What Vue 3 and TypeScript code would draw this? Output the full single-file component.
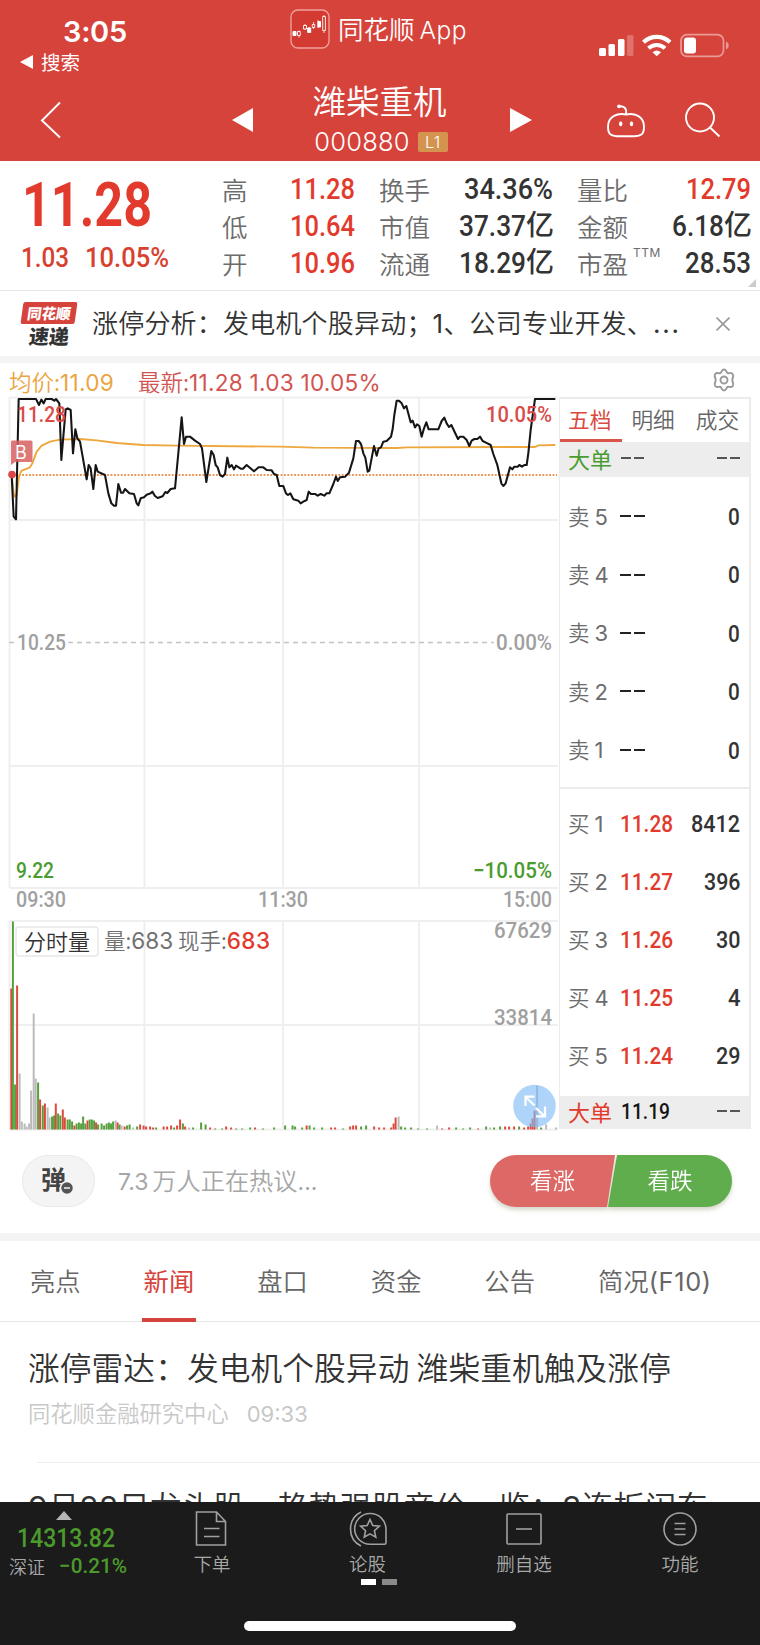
<script setup lang="ts">
import { h, type FunctionalComponent } from 'vue'

/* Narrow numerals: glyphs are fitted to width `w`, the box is as tall as a digit. */
const Num: FunctionalComponent<{ t: string; w: number; s: number }> = (p) =>
  h('svg', { class: 'num', width: p.w, height: p.s }, [
    h('text', {
      x: 0,
      y: p.s,
      'font-size': p.s / 0.711,
      textLength: p.w,
      lengthAdjust: 'spacingAndGlyphs',
    }, p.t),
  ])
Num.props = ['t', 'w', 's']

interface Stat { label: string; value: string; w: number; unit?: string; red?: boolean; sup?: string }
const stats: Stat[] = [
  { label: '高', value: '11.28', w: 65, red: true },
  { label: '换手', value: '34.36%', w: 89 },
  { label: '量比', value: '12.79', w: 65, red: true },
  { label: '低', value: '10.64', w: 65, red: true },
  { label: '市值', value: '37.37', w: 67, unit: '亿' },
  { label: '金额', value: '6.18', w: 52, unit: '亿' },
  { label: '开', value: '10.96', w: 65, red: true },
  { label: '流通', value: '18.29', w: 67, unit: '亿' },
  { label: '市盈', value: '28.53', w: 66, sup: 'TTM' },
]

const sells = ['5', '4', '3', '2', '1']
const buys = [
  { n: '1', price: '11.28', vol: '8412', w: 49 },
  { n: '2', price: '11.27', vol: '396', w: 36.5 },
  { n: '3', price: '11.26', vol: '30', w: 24.5 },
  { n: '4', price: '11.25', vol: '4', w: 12.5 },
  { n: '5', price: '11.24', vol: '29', w: 24.5 },
]

const axis = [
  { t: '11.28', x: 17, y: 422, w: 49, tone: 'up' },
  { t: '10.05%', x: 486, y: 422, w: 66, tone: 'up' },
  { t: '9.22', x: 16, y: 877.5, w: 38, tone: 'down' },
  { t: '−10.05%', x: 473, y: 877.5, w: 79, tone: 'down' },
  { t: '10.25', x: 17, y: 650, w: 49 },
  { t: '0.00%', x: 496, y: 650, w: 56 },
  { t: '09:30', x: 16, y: 906.5, w: 50 },
  { t: '11:30', x: 258, y: 906.5, w: 50 },
  { t: '15:00', x: 503, y: 906.5, w: 49 },
  { t: '67629', x: 494, y: 938, w: 58 },
  { t: '33814', x: 494, y: 1025, w: 58 },
]

/* Intraday series, three units per pixel. */
const price =
  '35,345 41,470 48,478 56,117 108,117 117,135 124,119 131,130 137,117 155,117 163,122 168,117 178,130 184,300 197,148 203,145 212,150 219,280 226,208 232,235 240,245 260,358 266,315 272,325 280,387 287,315 293,335 315,345 325,400 334,430 342,437 348,437 355,372 363,398 369,398 375,387 388,400 402,402 410,430 415,436 422,415 432,412 440,404 452,400 457,395 465,408 473,414 488,409 496,396 502,399 512,387 525,385 537,258 545,172 552,252 558,230 570,230 585,242 600,252 606,265 619,366 634,273 641,285 647,315 653,322 660,345 668,350 675,342 682,293 688,322 695,315 702,328 708,317 722,326 729,326 740,315 762,334 776,322 790,322 800,330 815,331 822,342 830,345 838,378 ' +
  '850,378 858,400 864,405 871,400 880,418 895,422 902,430 910,425 920,420 926,395 933,402 945,402 953,407 962,402 973,407 980,400 988,400 1000,372 1008,350 1013,363 1020,352 1035,350 1047,338 1060,295 1068,243 1076,243 1083,252 1090,280 1096,293 1103,335 1108,332 1113,305 1122,258 1130,287 1136,265 1143,262 1150,245 1160,243 1173,230 1178,207 1183,165 1190,122 1197,122 1205,130 1212,145 1219,138 1232,187 1238,182 1245,202 1251,193 1258,198 1265,230 1272,205 1279,187 1286,208 1315,208 1325,183 1333,173 1340,190 1347,201 1354,195 1374,237 1380,230 1390,230 1400,240 1408,258 1415,242 1423,237 1432,237 1440,230 1448,243 1458,248 1472,255 1480,282 1492,315 1504,370 1510,378 1517,370 1530,322 1537,328 1543,320 1553,320 1558,315 1566,320 1573,315 1580,315 1585,280 1592,210 1605,117 1666,117'
const average =
  '35,345 41,400 44,410 50,405 57,350 64,333 90,322 97,310 110,275 125,257 150,245 180,239 240,237 290,241 350,249 430,255 530,257 840,260 940,263 1190,264 1220,262 1605,261 1615,256 1666,255'

type Bar = [x: number, height: number, tone: 'r' | 'g' | 'n']
const bars: Bar[] = [
  [11.2, 141, 'r'], [12.8, 208, 'g'], [15, 45, 'g'], [17, 144, 'r'], [19.5, 56, 'n'], [21.7, 8, 'n'], [24.5, 6, 'n'],
  [26.5, 3, 'n'], [29, 6, 'n'], [31, 39, 'n'], [33.6, 116, 'n'], [35.6, 51, 'n'], [38, 47, 'g'], [40, 30, 'r'],
  [42.7, 24, 'g'], [44.8, 26, 'r'], [47.5, 22, 'n'], [49.5, 12, 'n'], [52, 13, 'g'], [54, 14, 'g'], [55.7, 26, 'r'],
  [58, 16, 'g'], [60.2, 14, 'g'], [62.7, 20, 'r'], [64.7, 12, 'r'], [67.5, 10, 'g'], [69.7, 10, 'g'], [72, 8, 'g'],
  [74.3, 4, 'r'], [76.5, 6, 'g'], [78.8, 7, 'g'], [81, 6, 'g'], [83, 13, 'g'], [85.2, 6, 'g'], [87.4, 9, 'r'],
  [89.6, 10, 'g'], [91.8, 10, 'g'], [94, 9, 'g'], [96, 7, 'r'], [98, 5, 'g'], [101.5, 6, 'g'], [104, 4, 'g'],
  [106.5, 6, 'g'], [108.8, 7, 'g'], [111, 6, 'g'], [113, 8, 'g'], [115.5, 9, 'n'], [117.5, 7, 'r'], [119.5, 5, 'g'],
  [121.5, 4, 'n'], [124.5, 3, 'r'], [127, 4, 'g'], [129.5, 5, 'g'], [133, 2, 'n'], [137, 3, 'g'], [140, 5, 'r'],
  [143.5, 4, 'r'], [146, 3, 'r'], [150, 3, 'r'], [153, 2, 'r'], [156, 2, 'g'], [163.5, 3, 'r'], [167, 3, 'r'],
  [171, 4, 'r'], [174, 2, 'g'], [177, 4, 'r'], [180, 10, 'r'], [182.8, 6, 'g'], [185, 3, 'r'], [189, 2, 'n'],
  [193, 2, 'g'], [201, 7, 'g'], [205.5, 5, 'g'], [210, 2, 'r'], [215, 1, 'g'], [222, 1, 'g'], [226, 3, 'r'],
  [231, 2, 'r'], [236, 1, 'g'], [242, 1, 'g'], [250, 2, 'g'], [255, 2, 'r'], [263, 1, 'g'], [274, 2, 'g'],
  [285, 4, 'g'], [292.5, 4, 'g'], [295, 3, 'g'], [302, 2, 'g'], [306.5, 4, 'r'], [309.5, 4, 'g'], [314, 2, 'g'],
  [322, 2, 'g'], [331, 2, 'r'], [335, 2, 'r'], [343, 1, 'g'], [350, 3, 'r'], [353, 4, 'r'], [356, 4, 'r'],
  [361, 3, 'g'], [366, 4, 'g'], [374, 3, 'r'], [379, 2, 'r'], [384, 2, 'r'], [391, 2, 'r'], [393.5, 6, 'r'],
  [395.5, 12, 'r'], [398.5, 13, 'n'], [401, 3, 'g'], [405, 2, 'g'], [411, 2, 'g'], [418, 1, 'g'], [427, 1, 'g'],
  [437, 4, 'n'], [442, 1, 'r'], [449, 2, 'r'], [456, 2, 'g'], [463, 1, 'g'], [470, 2, 'g'], [478, 1, 'r'],
  [486, 3, 'g'], [490, 2, 'n'], [494, 2, 'g'], [500, 3, 'g'], [505, 3, 'r'], [509, 3, 'r'], [514, 3, 'r'],
  [519, 3, 'g'], [524, 2, 'r'], [528, 3, 'r'], [530.5, 6, 'r'], [532.5, 11, 'r'], [534.5, 19, 'r'], [537, 44, 'n'],
  [541, 2, 'g'], [546, 5, 'n'], [556, 2, 'n'],
]

const tabs = ['亮点', '新闻', '盘口', '资金', '公告']
</script>

<template>
  <main class="app">
    <header class="top">
      <div class="status">
        <div class="clock">
          <b>3:05</b>
          <span><i class="tri-back"></i>搜索</span>
        </div>
        <div class="brand">
          <svg width="40" height="40" viewBox="0 0 40 40" fill="none" stroke="#fff">
            <rect x="1" y="1" width="38" height="38" rx="7" stroke="#f0a39d" stroke-width="1.3" fill="#d33a31" />
            <path d="M4.500 22v5M9 21.500v7M15 15v6M19 18v6M23.500 13v7M28 11v8M34 6v18" stroke-width=".8" />
            <path d="M3 22.500h3v4H3zM17.700 19h3v4.500h-3zM28 12.500h2.500v5.500H28z" fill="#fff" />
            <path d="M7.500 22.500h2.800v4H7.500zM13.500 16.500h3v3.500h-3zM22.300 15.500h2.400v3h-2.400zM32.700 7.500h2.700v14h-2.700z" fill="#d33a31" stroke-width=".9" />
          </svg>
          <span>同花顺<em>App</em></span>
        </div>
        <svg class="signals" width="134" height="26" viewBox="598 32 134 26">
          <rect x="599" y="48" width="7" height="8" rx="1.500" fill="#fff" />
          <rect x="608.500" y="44" width="6.500" height="12" rx="1.500" fill="#fff" />
          <rect x="618" y="39" width="6.500" height="17" rx="1.500" fill="#fff" />
          <rect x="627" y="35" width="6.500" height="21" rx="1.500" fill="#e0716b" />
          <g fill="none" stroke="#fff">
            <path d="M643.500 42.300a19 19 0 0 1 26.500 0" stroke-width="4.200" />
            <path d="M648.500 48.200a12 12 0 0 1 16.500 0" stroke-width="4" />
          </g>
          <path d="M652.500 52.200q4.200-3.300 8.500 0l-4.250 4z" fill="#fff" />
          <rect x="681" y="34.700" width="42.500" height="21.600" rx="6" fill="none" stroke="#ea9a95" stroke-width="1.700" />
          <rect x="684" y="37.500" width="12" height="16" rx="3" fill="#fff" />
          <path d="M726 41.500q2.800 1.200 2.800 4t-2.800 4z" fill="#ea9a95" />
        </svg>
      </div>
      <div class="nav">
        <svg class="back" width="22" height="38" viewBox="0 0 22 38"><path d="M20 1.500 2 19.500l18 17" /></svg>
        <svg class="prev" width="22" height="26" viewBox="0 0 22 26"><path d="M21 1v24L0 13z" /></svg>
        <div class="title">
          <h1>潍柴重机</h1>
          <p>000880<i>L1</i></p>
        </div>
        <svg class="next" width="22" height="26" viewBox="0 0 22 26"><path d="M0 1v24l22-12z" /></svg>
        <svg class="robot" width="38" height="36" viewBox="0 0 38 36">
          <path d="M19 12.500C27 10.800 37 13.500 37 25c0 8-4 9-9 9.300H10C5 34 1 33 1 25c0-11.500 10-14.200 18-12.500zM19 12C20 6 17 4 12 4.300" />
          <circle cx="12" cy="4.300" r="1.900" class="dot" /><ellipse cx="13.700" cy="21.700" rx="1.700" ry="2.500" class="dot" />
          <ellipse cx="24.500" cy="21.700" rx="1.700" ry="2.500" class="dot" />
        </svg>
        <svg class="search" width="36" height="36" viewBox="0 0 36 36"><circle cx="15" cy="15.500" r="14" /><path d="m25 25.500 9.500 9" /></svg>
      </div>
    </header>

    <section class="quote">
      <div class="last">
        <Num t="11.28" :w="130" :s="43" class="bold" />
        <div><Num t="1.03" :w="48" :s="20" /><Num t="10.05%" :w="84" :s="20" /></div>
      </div>
      <dl class="stats">
        <div v-for="s in stats" :key="s.label" :class="{ red: s.red }">
          <dt>{{ s.label }}<sup v-if="s.sup">{{ s.sup }}</sup></dt>
          <dd><Num :t="s.value" :w="s.w" :s="20.5" /><span v-if="s.unit">{{ s.unit }}</span></dd>
        </div>
      </dl>
      <i class="corner"></i>
    </section>

    <section class="flash">
      <div class="flash-logo"><b>同花顺</b><strong>速递</strong></div>
      <p>涨停分析：发电机个股异动；<em>1</em>、公司专业开发、<em class="dots">...</em></p>
      <svg width="14" height="14" viewBox="0 0 14 14"><path d="m.5.500 13 13m0-13-13 13" /></svg>
    </section>

    <section class="market">
      <div class="legend">
        <span class="avg">均价:<em>11.09</em></span>
        <span>最新:<em>11.28 1.03 10.05%</em></span>
        <svg width="24" height="24" viewBox="0 0 24 24">
          <path d="M12 1.500c2.400 0 2 2.800 3.600 3.600S19 3.500 20.600 6 20.300 9.500 20.300 12s2 3.600.5 6-3.600 0-5.200.9-1.200 3.600-3.600 3.600-2-2.700-3.600-3.600-3.600 1.500-5.200-.9 0.500-3.500 0.500-6S1.600 8.300 3.200 6 6.800 6 8.400 5.100 9.600 1.500 12 1.500z" />
          <circle cx="12" cy="12" r="3.500" />
        </svg>
      </div>
      <div class="board">
        <svg class="chart" width="559" height="735" viewBox="0 396 559 735">
          <g class="grid">
            <path d="M9.500 397.500H558M9.500 520H558M9.500 766H558M9.500 888H558M9.500 397v491M144.500 397v491M283 397v491M419 397v491" />
            <path d="M9.500 921H558M9.500 1025H558M9.500 1129.500H558M9.500 921v208M144.500 921v208M283 921v208M419 921v208" />
          </g>
          <path class="mid" d="M9 642.500H14M68 642.500H494" />
          <path class="ref" d="M12 475H557" />
          <g transform="translate(0 360) scale(.33333)">
            <polyline class="average" :points="average" />
            <polyline class="price" :points="price" />
          </g>
          <path class="flag" d="M12 440.500h19q1.500 0 1.500 1.500v18.500q0 1.500-1.500 1.500H15l-4 3v-23q0-1.500 1-1.500z" />
          <text class="flag-text" x="15" y="458.500">B</text>
          <circle cx="12" cy="474.500" r="3.800" fill="#dc4848" />
          <text
            v-for="a in axis" :key="a.t" class="digits" :class="a.tone"
            :x="a.x" :y="a.y" :textLength="a.w" lengthAdjust="spacingAndGlyphs"
          >{{ a.t }}</text>
          <rect v-for="b in bars" :key="b[0]" :class="'bar-' + b[2]" :x="b[0] - 0.9" :y="1129.5 - b[1]" width="2" :height="b[1]" />
          <rect class="chip" x="16" y="927" width="82" height="29" rx="3" />
          <text class="chip-text" x="24" y="950">分时量</text>
          <text class="vol-text" x="104" y="948.500">量:<tspan class="vnum">683</tspan></text>
          <text class="vol-text" x="178" y="948.500">现手:<tspan class="vnum hot">683</tspan></text>
          <circle cx="534.500" cy="1106" r="21.300" fill="#7dbcf6" fill-opacity=".62" />
          <path class="expand" d="M525.500 1106v-9.300h9M526 1097.200l8.500 8.300M536 1108l8.500 8.300M545 1106.500v9.800h-9" />
        </svg>
        <aside class="book">
          <nav><b>五档</b><span>明细</span><span>成交</span></nav>
          <div class="big green"><span>大单</span><i class="dash"></i><i class="dash"></i></div>
          <ul class="sell">
            <li v-for="n in sells" :key="n"><span>卖<em>{{ n }}</em></span><i class="dash wide"></i><Num t="0" :w="11.8" :s="16.5" /></li>
          </ul>
          <ul class="buy">
            <li v-for="b in buys" :key="b.n">
              <span>买<em>{{ b.n }}</em></span><Num class="red" :t="b.price" :w="53" :s="17" /><Num :t="b.vol" :w="b.w" :s="17" />
            </li>
          </ul>
          <div class="big hotrow"><span>大单</span><Num t="11.19" :w="49" :s="16" /><i class="dash"></i></div>
        </aside>
      </div>
    </section>

    <section class="talk">
      <div class="bullet">弹<svg width="14" height="14" viewBox="0 0 14 14"><circle cx="7" cy="7" r="6.500" /><path d="M4 7h6" /></svg></div>
      <p><em>7.3</em>万人正在热议<em>...</em></p>
      <div class="vote"><span class="rise">看涨</span><span class="fall">看跌</span></div>
    </section>

    <nav class="tabs">
      <span v-for="(t, i) in tabs" :key="t" :class="{ on: i === 1 }">{{ t }}</span>
      <span>简况<em>(F10)</em></span>
    </nav>

    <section class="news">
      <article>
        <h2>涨停雷达：发电机个股异动 潍柴重机触及涨停</h2>
        <p>同花顺金融研究中心<time>09:33</time></p>
      </article>
      <article class="second"><h2><em>9</em>月<em>28</em>日龙头股、趋势强股竞价一览：<em>3</em>连板闽东</h2></article>
    </section>

    <footer class="dock">
      <div class="index">
        <i class="tri-up"></i>
        <Num t="14313.82" :w="98" :s="18.5" />
        <p><span>深证</span><Num t="−0.21%" :w="68" :s="15" /></p>
      </div>
      <div class="actions">
        <div>
          <svg width="36" height="36" viewBox="0 0 36 36"><path d="M2.500 1h20l9 9.500V34h-29zM22.500 1v9.500h9M10 17.500h15.500M10 25.500h15.500" /></svg>下单
        </div>
        <div>
          <svg width="40" height="36" viewBox="0 0 40 36">
            <path d="M22 2.500a15.300 15.300 0 0 0 0 30.700h14.500q1.500 0 1.500-1.500V18A15.700 15.700 0 0 0 22 2.500zM13 1C-1 8-1 28 13 35" />
            <path d="m22 8.500 2.800 6 6.600.7-5 4.500 1.400 6.500-5.800-3.300-5.800 3.300 1.400-6.500-5-4.500 6.600-.7z" />
          </svg>论股
        </div>
        <div>
          <svg width="36" height="36" viewBox="0 0 36 36"><rect x="1" y="3" width="34" height="30" rx="1" /><path d="M10 18h16" /></svg>删自选
        </div>
        <div>
          <svg width="36" height="36" viewBox="0 0 36 36"><circle cx="18" cy="18" r="16" /><path d="M12.500 12.500h11M12.500 18h11M12.500 23.500h11" /></svg>功能
        </div>
      </div>
      <div class="pager"><i></i><i></i></div>
      <div class="home"></div>
    </footer>
  </main>
</template>

<style>
body { margin: 0; background: #fff; }
.num { display: block; overflow: visible; flex: none; fill: currentColor; font-family: Roboto, sans-serif; font-weight: 500; }
.num.bold { font-weight: 700; }
.num.red { color: #e23a2c; }
</style>

<style scoped>
.app {
  width: 760px; height: 1645px; overflow: hidden; background: #fff; color: #333;
  display: flex; flex-direction: column;
  font-family: "Noto Sans CJK SC", sans-serif; font-weight: 350; line-height: 1;
}
.app > * { flex: none; box-sizing: border-box; }
em, i { font-style: normal; }
em { font-family: Inter, sans-serif; font-weight: 400; }
h1, h2, p, dl, dd, ul { margin: 0; padding: 0; font-weight: inherit; }
svg { display: block; flex: none; }

.top { height: 161px; background: #d6433b; color: #fff; }
.status { height: 80px; display: flex; align-items: flex-start; }
.clock { width: 290px; padding-top: 17px; box-sizing: border-box; }
.clock b { display: block; margin-left: 63px; font: 600 29px/30px Inter, sans-serif; letter-spacing: -.3px; }
.clock span { display: flex; align-items: center; gap: 8px; margin: 5px 0 0 20px; font-size: 19.500px; font-weight: 400; }
.tri-back { border: 7px solid transparent; border-left: 0; border-right: 13px solid #fff; }
.brand { width: 308px; display: flex; gap: 8px; padding-top: 9px; font-size: 25.500px; line-height: 37px; }
.brand em { margin-left: 5px; font-size: 24.500px; font-weight: 350; letter-spacing: .5px; }
.signals { margin-top: 32px; }
.nav { display: flex; height: 80px; }
.nav svg { fill: none; stroke: #fff; stroke-width: 1.900; }
.nav .back { margin: 21px 0 0 40px; }
.nav .prev, .nav .next { margin-top: 27px; fill: #fff; stroke: none; }
.nav .prev { margin-left: 170px; }
.title { width: 256px; text-align: center; box-sizing: border-box; padding-right: 5px; }
.title h1 { font-size: 33.500px; line-height: 40px; }
.title p { display: flex; justify-content: center; align-items: center; gap: 8px; margin: 11px -3px 0 0; font: 350 25.500px/22px Inter, sans-serif; letter-spacing: .2px; }
.title i { width: 30px; height: 20px; border-radius: 2px; background: #d4934f; font-size: 16.500px; line-height: 20px; }
.nav .robot { margin: 22px 0 0 75px; }
.nav .search { margin: 22px 0 0 40px; }
.nav .dot { fill: #fff; stroke: none; }

.quote { height: 130px; display: flex; border-bottom: 1px solid #e6e6e6; position: relative; }
.last { width: 222px; color: #e23a2c; box-sizing: border-box; padding: 22px 0 0 22px; }
.last div { display: flex; gap: 16px; margin-top: 21px; margin-left: -1px; color: #d8402f; }
.stats { display: grid; grid-template-columns: 133px 174px 174px; column-gap: 24px; grid-auto-rows: 37px; padding-top: 9px; }
.stats > div { display: flex; justify-content: space-between; align-items: center; }
.stats dt { font-size: 25.500px; color: #6c6c6c; display: flex; }
.stats sup { font: 12px/12px Inter, sans-serif; letter-spacing: .5px; margin: -3px 0 0 5px; }
.stats dd { display: flex; align-items: center; color: #333; }
.stats dd span { font-size: 28px; font-weight: 500; line-height: 30px; margin: -5px -1px 0 0; }
.stats .red dd { color: #e23a2c; }
.corner { position: absolute; right: 4px; bottom: 3px; border: 4.500px solid #ccc; border-left-color: transparent; border-top-color: transparent; }

.flash { height: 72px; border-bottom: 7px solid #f4f4f4; display: flex; align-items: center; padding-left: 22px; }
.flash-logo { width: 54px; height: 44px; text-align: center; font-weight: 700; }
.flash-logo b { display: block; height: 22px; background: #d6433b; color: #fff; font-size: 14.500px; line-height: 21px; border-radius: 2px; transform: skewX(-8deg); }
.flash-logo strong { display: block; margin-top: 1px; font-size: 20px; font-weight: 900; transform: skewX(-6deg); line-height: 22px; }
.flash p { width: 610px; padding-left: 16px; font-size: 26px; letter-spacing: .2px; line-height: 34px; margin-top: -2px; white-space: nowrap; }
.flash .dots { letter-spacing: 1.800px; }
.flash svg { margin-left: 14px; stroke: #999; stroke-width: 1.600; }

.market { height: 767px; }
.legend { height: 34px; display: flex; align-items: center; color: #d15450; font-size: 22.500px; padding-left: 9px; white-space: pre; }
.legend span { padding-top: 5px; }
.legend .avg { color: #e9a541; width: 129px; }
.legend em { font-size: 22.600px; letter-spacing: .25px; }
.legend svg { margin: 0 24px 0 auto; fill: none; stroke: #999; stroke-width: 1.900; }
.board { display: flex; }
.chart { margin-top: -1px; }
.grid { stroke: #efefef; stroke-width: 2; fill: none; }
.mid { stroke: #c4c4c4; stroke-width: 1.500; stroke-dasharray: 5 4; }
.ref { stroke: #ee9250; stroke-width: 1.800; stroke-dasharray: 1.800 1.600; }
.average, .price { fill: none; stroke-width: 5.700; stroke-linejoin: round; }
.average { stroke: #eda73d; }
.price { stroke: #151515; stroke-width: 6.200; }
.flag { fill: #d75f60; fill-opacity: .85; }
.flag-text { fill: #fff; font: 18px Inter, sans-serif; }
.digits { font-family: Roboto, sans-serif; font-size: 22px; font-weight: 500; fill: #a0a0a0; }
.up { fill: #d94a48; }
.down { fill: #4a9c30; }
.bar-r { fill: #dc4a3d; }
.bar-g { fill: #55a03c; }
.bar-n { fill: #bbb; }
.chip { fill: #fff; stroke: #e8e8e8; stroke-width: 1.500; }
.chip-text { font-size: 22px; fill: #333; }
.vol-text { font-size: 21.500px; fill: #707070; }
.vnum { font-family: Inter, sans-serif; font-size: 22.500px; font-weight: 400; }
.hot { fill: #e23a2c; font-weight: 500; letter-spacing: .4px; }
.expand { fill: none; stroke: #fff; stroke-width: 2.200; }

.book { width: 192px; height: 732px; box-sizing: border-box; border: solid #ebebeb; border-width: 2px 2px 0 1px; }
.book nav { height: 43px; display: flex; gap: 21px; padding-left: 8px; font-size: 21.700px; line-height: 40px; color: #666; box-sizing: border-box; }
.book nav b { font-weight: 400; color: #d94b42; height: 43px; box-sizing: border-box; border-bottom: 3px solid #d9544a; margin: 0 -11px 0 -8px; padding: 0 11px 0 8px; }
.book nav b + span { margin-left: -1px; }
.big { height: 35px; box-sizing: border-box; display: flex; align-items: center; background: #ededed; padding: 0 9px 3px 8px; font-size: 22px; }
.big span { width: 53px; font-weight: 400; }
.big .dash:last-child { margin-left: auto; }
.green span { color: #4a9c30; }
.hotrow { height: 33px; color: #151515; }
.hotrow span { color: #e23a2c; }
.dash { width: 23px; height: 2px; background: linear-gradient(90deg, #555 10px, transparent 10px 13px, #555 13px); }
.dash.wide { width: 25px; height: 2px; background: linear-gradient(90deg, #222 11px, transparent 11px 14px, #222 14px); }
.book ul { list-style: none; }
.book li { height: 58.400px; display: flex; align-items: center; padding: 0 9px 0 8px; }
.book li > span { width: 52px; font-size: 21.500px; color: #6c6c6c; }
.book li em { margin-left: 5px; font-size: 22px; }
.book li > :last-child { margin-left: auto; }
.sell { padding: 10px 0 8px; border-bottom: 2px solid #ebebeb; }
.buy { padding: 6px 0 11px; }
.book .buy li { height: 58px; }

.talk { height: 111px; border-bottom: 8px solid #f4f4f4; display: flex; align-items: flex-start; padding: 25px 0 0 22px; }
.bullet { width: 73px; height: 52px; border-radius: 26px; box-sizing: border-box; border: 1.500px solid #e9e9e9; background: #f4f4f4; position: relative; font-size: 25px; font-weight: 700; line-height: 45px; padding-left: 18px; color: #444; }
.bullet svg { position: absolute; left: 37px; top: 25px; fill: #555; stroke: #f4f4f4; stroke-width: 1.500; }
.talk p { margin-left: 23px; width: 372px; color: #a6a6a6; font-size: 24.200px; line-height: 50px; }
.talk p em { font-size: 23px; }
.talk p em:first-child { margin-right: 4px; }
.vote { width: 242px; height: 52px; display: flex; color: #fff; font-size: 22.500px; line-height: 49px; text-align: center; filter: drop-shadow(0 3px 2px rgba(120, 120, 80, .3)); }
.vote span { box-sizing: border-box; }
.rise { width: 126px; border-radius: 26px 0 0 26px; background: #dd6966; clip-path: polygon(0 0, 100% 0, 117px 100%, 0 100%); }
.fall { width: 125px; margin-left: -7px; border-radius: 0 26px 26px 0; background: #60ad4d; clip-path: polygon(9px 0, 100% 0, 100% 100%, 0 100%); }

.tabs { height: 81px; display: flex; gap: 63px; padding-left: 30px; border-bottom: 1px solid #e8e8e8; font-size: 25.300px; line-height: 78px; color: #666; }
.tabs span { height: 81px; box-sizing: border-box; }
.tabs em { letter-spacing: .7px; }
.tabs .on { color: #d6433b; font-weight: 400; border-bottom: 4px solid #d6433b; margin: 0 -2px; padding: 0 2px; }

.news { height: 180px; overflow: hidden; padding-left: 28px; }
.news article:first-child { height: 141px; position: relative; border-bottom: 1.500px solid #eee; margin-left: 9px; box-sizing: border-box; }
.news article:first-child > * { margin-left: -9px; }
.news h2 { font-size: 31.700px; letter-spacing: .1px; line-height: 40px; padding-top: 24px; white-space: nowrap; }
.news .second h2 { padding-top: 22px; letter-spacing: 0; }
.news p { padding-top: 13px; font-size: 22.300px; line-height: 26px; color: #c8c8c8; }
.news time { margin-left: 18px; font-family: Inter, sans-serif; font-weight: 400; font-size: 22px; }

.dock { height: 143px; background: #1b1b1b; color: #a8a8a8; display: grid; grid-template-columns: 135px 1fr; grid-template-rows: 77px 42px auto; }
.index { display: flex; flex-direction: column; color: #4c9a2b; padding: 9px 0 0 17px; }
.tri-up { width: 0; border: 8px solid transparent; border-top: 0; border-bottom: 9px solid #b5b5b5; margin: 0 0 8px 39px; }
.index p { display: flex; align-items: center; gap: 14px; margin: 10px 0 0 -8px; font-size: 18px; }
.index span { color: #a8a8a8; }
.actions { display: grid; grid-template-columns: 154px 157px 156px 156px; font-size: 18.500px; line-height: 20px; text-align: center; }
.actions div { display: flex; flex-direction: column; align-items: center; padding-top: 9px; gap: 6px; }
.actions svg { fill: none; stroke: #a0a0a0; stroke-width: 1.600; }
.pager { grid-column: 1 / -1; display: flex; gap: 6px; padding-left: 361px; }
.pager i { width: 15px; height: 6px; background: #fff; }
.pager i + i { background: #8a8a8a; }
.home { grid-column: 1 / -1; justify-self: center; width: 272px; height: 9.500px; border-radius: 5px; background: #fff; }
</style>
